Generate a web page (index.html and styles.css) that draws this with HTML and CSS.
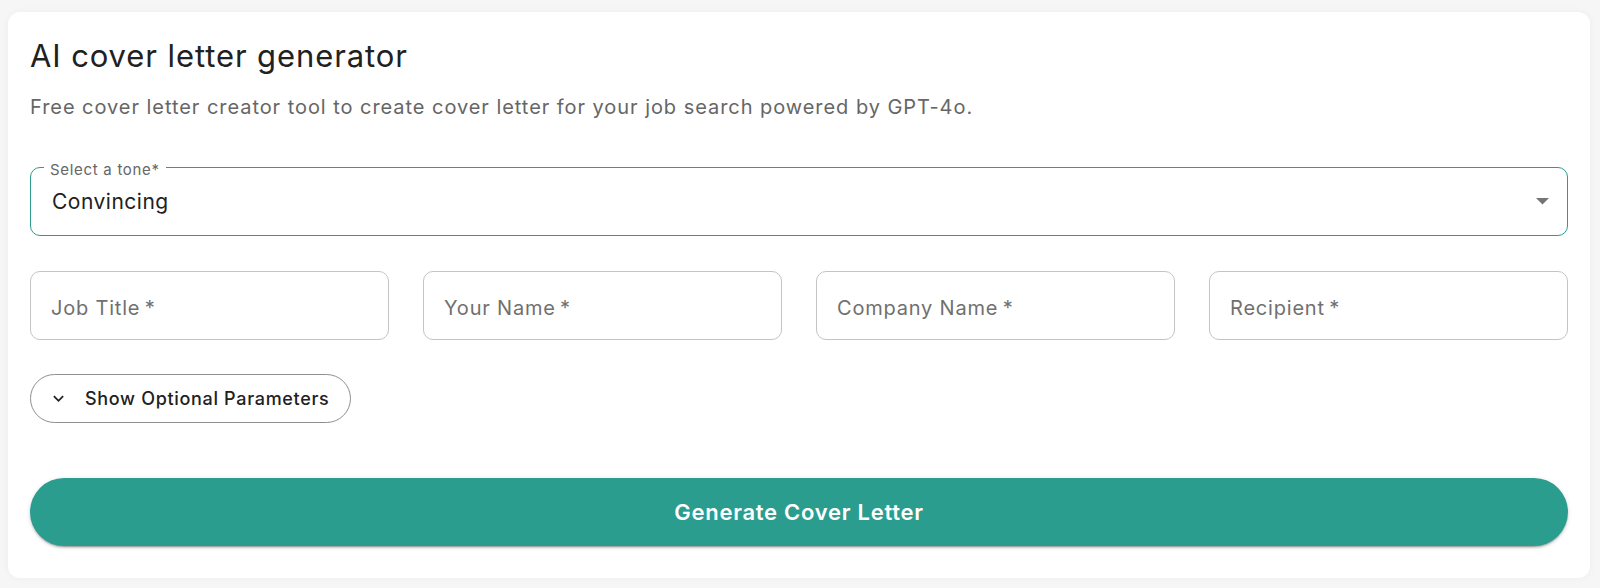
FILE: index.html
```html
<!DOCTYPE html>
<html lang="en">
<head>
<meta charset="utf-8">
<title>AI cover letter generator</title>
<link rel="stylesheet" href="styles.css">
</head>
<body>
<main class="card">
  <h1 class="title">AI cover letter generator</h1>
  <p class="subtitle">Free cover letter creator tool to create cover letter for your job search powered by GPT-4o.</p>

  <div class="select">
    <span class="select-label">Select a tone*</span>
    <span class="select-value">Convincing</span>
    <svg class="select-arrow" viewBox="0 0 10 5" width="13" height="6.5" aria-hidden="true"><path d="M0 0l5 5 5-5z" fill="#757575"/></svg>
  </div>

  <div class="fields">
    <div class="field"><span class="placeholder">Job Title&thinsp;*</span></div>
    <div class="field"><span class="placeholder">Your Name&thinsp;*</span></div>
    <div class="field"><span class="placeholder">Company Name&thinsp;*</span></div>
    <div class="field"><span class="placeholder">Recipient&thinsp;*</span></div>
  </div>

  <div class="options-row">
    <button class="chip" type="button">
      <svg class="chip-icon" viewBox="0 0 24 24" width="21" height="21" aria-hidden="true"><path d="M16.59 8.59 12 13.17 7.41 8.59 6 10l6 6 6-6z" fill="#222"/></svg>
      <span>Show Optional Parameters</span>
    </button>
  </div>

  <button class="generate" type="button">Generate Cover Letter</button>
</main>
</body>
</html>
```

FILE: styles.css
```css
* { box-sizing: border-box; }

html, body {
  margin: 0;
  background: #f6f6f6;
}

body {
  padding: 12px 10px 10px 8px;
  font-family: Inter, "Noto Sans", "Liberation Sans", sans-serif;
  color: #212121;
}

.card {
  background: #fff;
  border-radius: 12px;
  box-shadow: 0 0 8px rgba(0, 0, 0, 0.04);
  padding: 26px 22px 32px 22px;
  display: flex;
  flex-direction: column;
}

.title {
  margin: 0;
  font-size: 31px;
  line-height: 36px;
  font-weight: 400;
  letter-spacing: 0.9px;
  color: #212121;
}

.subtitle {
  margin: 19px 0 0 0;
  font-size: 20px;
  line-height: 28px;
  letter-spacing: 0.95px;
  color: #666;
}

.select {
  position: relative;
  margin-top: 46px;
  height: 69px;
  border: 1.5px solid #2a9d8f;
  border-radius: 10px;
  display: flex;
  align-items: center;
  padding: 0 18px 0 21px;
}

.select-label {
  position: absolute;
  left: 13px;
  top: -7.5px;
  padding: 0 6px;
  background: #fff;
  font-size: 15px;
  line-height: 18px;
  letter-spacing: 0.7px;
  color: #666;
}

.select-value {
  flex: 1;
  font-size: 21px;
  letter-spacing: 0.5px;
  color: #212121;
}

.select-arrow {
  flex: none;
}

.fields {
  margin-top: 35px;
  display: grid;
  grid-template-columns: repeat(4, 1fr);
  gap: 34px;
}

.field {
  height: 69px;
  border: 1px solid #c4c4c4;
  border-radius: 10px;
  display: flex;
  align-items: center;
  padding: 4px 20px 0 20px;
}

.placeholder {
  font-size: 20px;
  letter-spacing: 0.8px;
  color: #707070;
}

.options-row {
  margin-top: 34px;
  display: flex;
}

.chip {
  height: 49px;
  border: 1px solid #8f8f8f;
  border-radius: 25px;
  background: #fff;
  display: flex;
  align-items: center;
  gap: 16px;
  padding: 0 21px 0 17px;
  font-family: inherit;
  font-size: 18px;
  font-weight: 500;
  letter-spacing: 0.68px;
  color: #212121;
  cursor: pointer;
}

.chip-icon { flex: none; }

.generate {
  margin-top: 55px;
  height: 68px;
  border: none;
  border-radius: 34px;
  background: #2a9d8f;
  color: #fff;
  font-family: inherit;
  font-size: 22px;
  font-weight: 600;
  letter-spacing: 0.73px;
  box-shadow: 0 3px 1px -2px rgba(0,0,0,.2), 0 2px 2px 0 rgba(0,0,0,.14), 0 1px 5px 0 rgba(0,0,0,.12);
  cursor: pointer;
}
```
